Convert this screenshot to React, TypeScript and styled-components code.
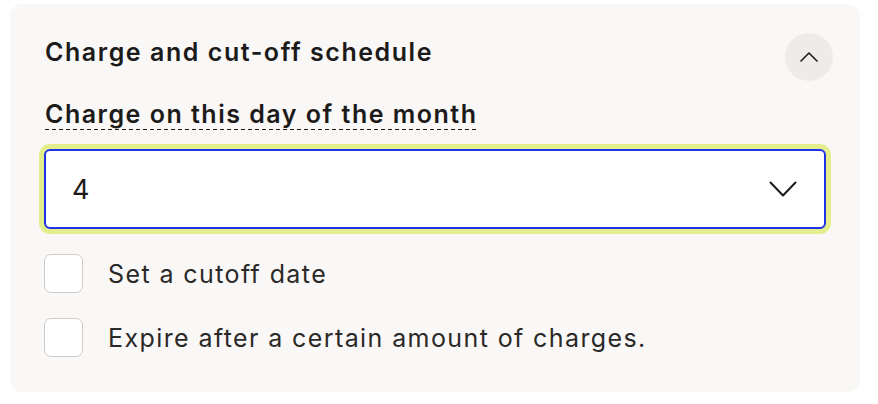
import React, { useState } from "react";
import styled, { createGlobalStyle } from "styled-components";

const GlobalStyle = createGlobalStyle`
  * { box-sizing: border-box; }
  html, body {
    margin: 0;
    padding: 0;
    background: #ffffff;
    font-family: Inter, "Noto Sans", sans-serif;
    color: #1d1b1a;
  }
`;

const Page = styled.div`
  padding: 4px 18px 13px 10px;
`;

const Panel = styled.section`
  background: #f9f8f7;
  border-radius: 12px;
  padding: 29px 34px 35px 34px;
  display: flex;
  flex-direction: column;
`;

const Header = styled.div`
  display: flex;
  align-items: flex-start;
  justify-content: space-between;
  margin-right: -7px;
`;

const Title = styled.h2`
  margin: 3px 0 0 1px;
  font-size: 25px;
  line-height: 32px;
  font-weight: 600;
  letter-spacing: 1.55px;
`;

const RoundButton = styled.button`
  width: 48px;
  height: 48px;
  border-radius: 50%;
  border: none;
  background: #efebe9;
  display: flex;
  align-items: center;
  justify-content: center;
  padding: 0;
  cursor: pointer;
`;

const FieldLabel = styled.label`
  align-self: flex-start;
  margin: 19px 0 0 1px;
  padding-bottom: 2px;
  font-size: 25px;
  font-weight: 600;
  line-height: 28px;
  letter-spacing: 1.5px;
  background-image: linear-gradient(to right, #1d1b1a 4px, transparent 4px);
  background-size: 7px 1.5px;
  background-position: left bottom;
  background-repeat: repeat-x;
`;

const SelectBox = styled.div`
  margin-top: 19px;
  height: 80px;
  background: #ffffff;
  border: 2px solid #1f33e6;
  border-radius: 6px;
  box-shadow: 0 0 0 5px #e5ee8d;
  display: flex;
  align-items: center;
  justify-content: space-between;
  padding: 0 27px 0 26px;
  font-size: 27px;
  color: #1d1b1a;
`;

const Options = styled.div`
  display: flex;
  flex-direction: column;
  gap: 25px;
  margin-top: 25px;
`;

const CheckRow = styled.label`
  display: flex;
  align-items: center;
  gap: 25px;
  font-size: 25px;
  letter-spacing: 1.4px;
  color: #2b2928;
  cursor: pointer;
`;

const Box = styled.span<{ $checked: boolean }>`
  width: 39px;
  height: 39px;
  flex-shrink: 0;
  border: 1.5px solid #cfcbc8;
  border-radius: 7px;
  background: ${(p) => (p.$checked ? "#1d1b1a" : "#ffffff")};
`;

const ChevronUp = () => (
  <svg width="18" height="10" viewBox="0 0 18 10" fill="none">
    <path
      d="M1 9l8-8 8 8"
      stroke="#1d1b1a"
      strokeWidth={1.6}
      strokeLinecap="round"
      strokeLinejoin="round"
    />
  </svg>
);

const ChevronDown = () => (
  <svg width="28" height="16" viewBox="0 0 28 16" fill="none">
    <path
      d="M1.5 1.5l12.5 13 12.5-13"
      stroke="#1d1b1a"
      strokeWidth={2}
      strokeLinecap="round"
      strokeLinejoin="round"
    />
  </svg>
);

const options = [
  "Set a cutoff date",
  "Expire after a certain amount of charges.",
];

export default function App() {
  const [checked, setChecked] = useState<boolean[]>([false, false]);

  return (
    <>
      <GlobalStyle />
      <Page>
        <Panel>
          <Header>
            <Title>Charge and cut-off schedule</Title>
            <RoundButton aria-label="Collapse">
              <ChevronUp />
            </RoundButton>
          </Header>
          <FieldLabel>Charge on this day of the month</FieldLabel>
          <SelectBox>
            <span>4</span>
            <ChevronDown />
          </SelectBox>
          <Options>
            {options.map((text, i) => (
              <CheckRow
                key={text}
                onClick={() =>
                  setChecked((c) => c.map((v, j) => (j === i ? !v : v)))
                }
              >
                <Box $checked={checked[i]} />
                {text}
              </CheckRow>
            ))}
          </Options>
        </Panel>
      </Page>
    </>
  );
}
